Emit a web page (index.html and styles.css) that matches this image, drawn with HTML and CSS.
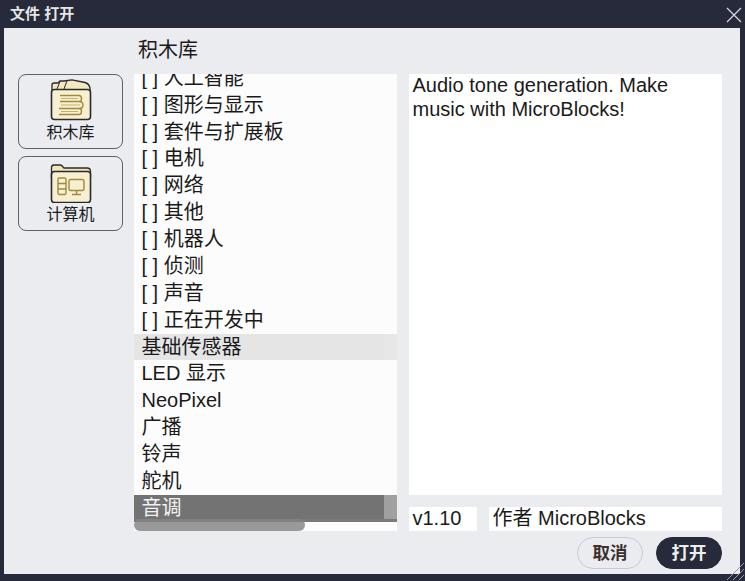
FILE: index.html
```html
<!DOCTYPE html>
<html lang="zh-CN">
<head>
<meta charset="UTF-8">
<title>文件 打开</title>
<link rel="stylesheet" href="styles.css">
</head>
<body>
  <div class="titlebar">
    <span class="title">文件 打开</span>
    <svg class="close" width="16" height="16" viewBox="0 0 16 16"><path d="M1 1L15 15M15 1L1 15" stroke="#d8dae0" stroke-width="1.2" fill="none"/></svg>
  </div>

  <div class="dialog">
    <div class="side">
      <div class="place">
        <svg class="place_icon" width="42" height="42" viewBox="0 0 42 42">
          <!-- 本 -->
          <path d="M2 14V6Q2 4 4 4H8L10 2H14L22 .8L35 3.500Q39 4.500 40 9V14Z" fill="#f3e8c2" stroke="#2a2a2a" stroke-width="1.300"/>
          <path d="M7 10L10 2.500M14 10L17 1.800" fill="none" stroke="#2a2a2a" stroke-width="1"/>
          <rect x="1.500" y="10.500" width="39" height="30" rx="3" fill="#f7efd2" stroke="#2a2a2a" stroke-width="1.600"/>
          <path d="M10 16.500H29Q31.500 16.500 31.500 19.500T29 22.500H10M29 22.500Q33 22.500 33 26T29 29.500H9M29 29.500Q31.500 29.500 31.500 32.500T29 35.500H9" fill="none" stroke="#a08a3c" stroke-width="1.400"/>
          <path d="M11 19.500H28M11 26H30M11 32.500H28" fill="none" stroke="#c4b06a" stroke-width="1"/>
        </svg>
        <span>积木库</span>
      </div>
      <div class="place">
        <svg class="place_icon" width="42" height="42" viewBox="0 0 42 42">
          <path d="M1.500 16V6.500Q1.500 4 4 4H10Q12 4 13 6L14 7H37Q40.500 7 40.500 10.500V16Z" fill="#f0e4b8" stroke="#2a2a2a" stroke-width="1.300"/>
          <rect x="1.500" y="10.500" width="39" height="31" rx="3" fill="#f7efd2" stroke="#2a2a2a" stroke-width="1.600"/>
          <rect x="8" y="17" width="8" height="16.500" rx="1.500" fill="none" stroke="#a08a3c" stroke-width="1.400"/>
          <path d="M8 22.500H16M8 28H16" stroke="#a08a3c" stroke-width="1.400"/>
          <rect x="19" y="18.500" width="15" height="11" rx="1.500" fill="none" stroke="#a08a3c" stroke-width="1.400"/>
          <path d="M26.500 29.500V33M22 33.500H31" stroke="#a08a3c" stroke-width="1.400"/>
        </svg>
        <span>计算机</span>
      </div>
    </div>

    <div class="main">
      <div class="heading">积木库</div>
      <div class="panes">
        <div class="left_col">
          <div class="list">
            <div class="rows">
              <div class="row">[ ] 人工智能</div>
              <div class="row">[ ] 图形与显示</div>
              <div class="row">[ ] 套件与扩展板</div>
              <div class="row">[ ] 电机</div>
              <div class="row">[ ] 网络</div>
              <div class="row">[ ] 其他</div>
              <div class="row">[ ] 机器人</div>
              <div class="row">[ ] 侦测</div>
              <div class="row">[ ] 声音</div>
              <div class="row">[ ] 正在开发中</div>
              <div class="row hover">基础传感器</div>
              <div class="row">LED 显示</div>
              <div class="row">NeoPixel</div>
              <div class="row">广播</div>
              <div class="row">铃声</div>
              <div class="row">舵机</div>
              <div class="row selected">音调</div>
            </div>
            <div class="vscroll"><div class="vthumb"></div></div>
            <div class="hscroll"><div class="hthumb"></div></div>
          </div>
        </div>
        <div class="right_col">
          <div class="description"><div class="description_text">Audio tone generation. Make music with MicroBlocks!</div></div>
          <div class="meta">
            <div class="version">v1.10</div>
            <div class="author">作者 MicroBlocks</div>
          </div>
        </div>
      </div>
      <div class="buttons">
        <div class="btn cancel">取消</div>
        <div class="btn open">打开</div>
      </div>
    </div>
  </div>

  <svg class="grip" width="20" height="20" viewBox="0 0 20 20"><path d="M2 19L19 2M8 19L19 8M14 19L19 14" stroke="#9a9ca6" stroke-width="1" fill="none"/></svg>
</body>
</html>
```

FILE: styles.css
```css
html, body {
  margin: 0;
  padding: 0;
  height: 100%;
}

body {
  position: relative;
  display: flex;
  flex-direction: column;
  height: 581px;
  overflow: hidden;
  background-color: #262a3b;
  font-family: "Liberation Sans", "Noto Sans CJK SC", sans-serif;
  color: #1a1a1a;
}

.titlebar {
  display: flex;
  justify-content: space-between;
  align-items: center;
  box-sizing: border-box;
  height: 28px;
  padding: 0 3px 4px 10px;
  flex: none;
}

.title {
  font-size: 15px;
  font-weight: 700;
  color: #e6e6e6;
}

.close {
  margin-top: 6px;
}

.dialog {
  display: flex;
  height: 546px;
  margin: 0 5px 0 4px;
  background-color: #ebecf0;
}

.side {
  display: flex;
  flex-direction: column;
  gap: 7px;
  width: 130px;
  padding: 46px 0 0 14px;
  box-sizing: border-box;
}

.place {
  display: flex;
  flex-direction: column;
  align-items: center;
  box-sizing: border-box;
  width: 105px;
  height: 75px;
  padding-top: 4px;
  border: 1px solid #5f6166;
  border-radius: 8px;
  font-size: 16px;
  line-height: 20px;
}

.place_icon {
  flex: none;
  margin-bottom: 2px;
}

.main {
  display: flex;
  flex-direction: column;
  width: 588px;
}

.heading {
  height: 46px;
  padding: 9px 0 0 4px;
  box-sizing: border-box;
  font-size: 20px;
  line-height: 26px;
}

.panes {
  display: flex;
  gap: 12px;
  height: 457px;
}

.left_col {
  width: 263px;
}

.list {
  position: relative;
  height: 100%;
  overflow: hidden;
  background-color: #fcfcfc;
  font-size: 20px;
}

.rows {
  margin-top: -9.100px;
}

.row {
  height: 26.870px;
  padding-left: 7.500px;
  line-height: 26px;
  white-space: nowrap;
}

.hover {
  background-color: #e5e5e5;
}

.selected {
  background-color: #737373;
  color: #f2f2f2;
}

.vscroll {
  position: absolute;
  top: 0;
  right: 0;
  bottom: 12px;
  width: 13px;
  background-color: rgba(255, 255, 255, 0.1);
}

.vthumb {
  position: absolute;
  left: 0;
  right: 0;
  bottom: 0;
  height: 24px;
  background-color: rgba(255, 255, 255, 0.25);
}

.hscroll {
  position: absolute;
  left: 0;
  right: 0;
  bottom: 0;
  height: 12px;
  background-color: rgba(255, 255, 255, 0.05);
}

.hthumb {
  width: 171px;
  height: 100%;
  border-radius: 6px;
  background-color: rgba(131, 131, 131, 0.82);
}

.right_col {
  display: flex;
  flex-direction: column;
  gap: 12px;
  width: 313px;
}

.description {
  height: 421px;
  padding: 0 3.500px;
  background-color: #ffffff;
  font-size: 20px;
  line-height: 24px;
}

.description_text {
  margin-top: -1px;
}

.meta {
  display: flex;
  gap: 12px;
  height: 24px;
  font-size: 20px;
  line-height: 22px;
}

.version {
  box-sizing: border-box;
  width: 68px;
  padding-left: 3.500px;
  background-color: #ffffff;
}

.author {
  flex: 1;
  padding-left: 3.500px;
  background-color: #ffffff;
}

.buttons {
  display: flex;
  justify-content: flex-end;
  gap: 13px;
  padding: 6px 0 0 0;
  width: 588px;
}

.btn {
  box-sizing: border-box;
  width: 66px;
  height: 32px;
  border-radius: 16px;
  font-size: 17.500px;
  font-weight: 700;
  line-height: 30px;
  text-align: center;
}

.cancel {
  border: 1px solid #c9cad4;
  color: #3e3030;
}

.open {
  background-color: #262a3b;
  border: 1px solid #262a3b;
  color: #eeeeee;
}

.grip {
  position: absolute;
  right: 0;
  bottom: 0;
}
```
